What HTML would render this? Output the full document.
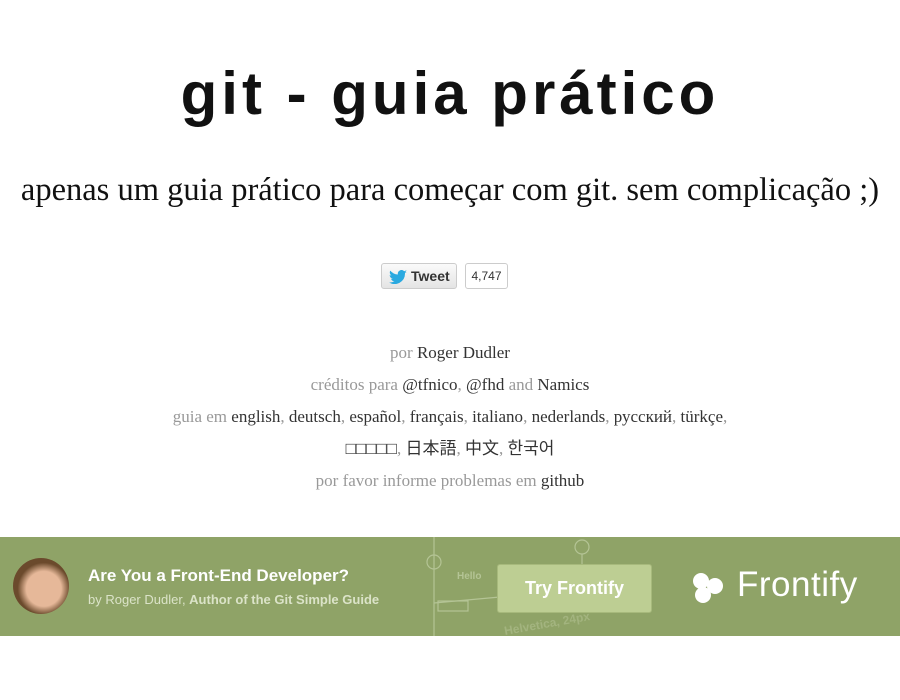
<!DOCTYPE html>
<html><head><meta charset="utf-8"><style>
body{margin:0;width:900px;height:700px;background:#fff;overflow:hidden;font-family:"Liberation Serif",serif;}
h1{position:absolute;top:54px;left:0;width:900px;margin:0;text-align:center;font-family:"Liberation Sans",sans-serif;font-weight:bold;font-size:60px;letter-spacing:4px;color:#111;line-height:80px}
.sub{position:absolute;top:172px;width:900px;text-align:center;font-size:32.5px;color:#111;white-space:nowrap}
.tw{position:absolute;top:263px;left:381px;width:76px;height:26px;border:1px solid #ccc;border-radius:3px;background:linear-gradient(#fafafa,#e4e4e4);font:bold 14px "Liberation Sans",sans-serif;color:#333;box-sizing:border-box;line-height:24px;padding-left:29px}
.cnt{position:absolute;top:263px;left:465px;width:43px;height:26px;border:1px solid #ccc;border-radius:3px;box-sizing:border-box;font:12px "Liberation Sans",sans-serif;color:#333;line-height:24px;text-align:center}
.lines{position:absolute;top:337px;width:900px;text-align:center;font-size:17px;color:#999;line-height:32px;white-space:nowrap}
.lines a{color:#333;text-decoration:none}
.ban{position:absolute;top:537px;left:0;width:900px;height:99px;background:#8fa367;font-family:"Liberation Sans",sans-serif}
</style></head><body>
<h1>git - guia prático</h1>
<div class="sub">apenas um guia prático para começar com git. sem complicação ;)</div>
<div class="tw"><svg style="position:absolute;left:7px;top:6px" width="18" height="14" viewBox="0 0 18 14"><path d="M18 1.7c-.7.3-1.4.5-2.1.6.8-.5 1.3-1.2 1.6-2-.7.4-1.5.7-2.3.9A3.7 3.7 0 0 0 8.9 4.5 10.4 10.4 0 0 1 1.3.6a3.7 3.7 0 0 0 1.1 4.9c-.6 0-1.2-.2-1.7-.5 0 1.8 1.3 3.3 3 3.6-.5.2-1.1.2-1.7.1.5 1.5 1.8 2.5 3.4 2.6A7.4 7.4 0 0 1 0 12.4 10.4 10.4 0 0 0 16 3.5v-.5c.8-.4 1.5-1 2-1.3z" fill="#2aa9e0"/></svg>Tweet</div>
<div class="cnt">4,747</div>
<div class="lines">
por <a>Roger Dudler</a><br>
créditos para <a>@tfnico</a>, <a>@fhd</a> and <a>Namics</a><br>
guia em <a>english</a>, <a>deutsch</a>, <a>español</a>, <a>français</a>, <a>italiano</a>, <a>nederlands</a>, <a>русский</a>, <a>türkçe</a>,<br>
<a style="font-family:'Liberation Sans','Noto Sans CJK JP',sans-serif">□□□□□</a>, <a style="font-family:'Liberation Sans','Noto Sans CJK JP',sans-serif">日本語</a>, <a style="font-family:'Liberation Sans','Noto Sans CJK SC',sans-serif">中文</a>, <a style="font-family:'Liberation Sans','Noto Sans CJK KR',sans-serif">한국어</a><br>
por favor informe problemas em <a>github</a>
</div>
<div class="ban">
<svg style="position:absolute;left:420px;top:0" width="220" height="99"><g stroke="#b4c495" fill="none" stroke-width="1.2"><line x1="14" y1="0" x2="14" y2="99"/><circle cx="14" cy="25" r="7"/><circle cx="162" cy="10" r="7"/><line x1="162" y1="17" x2="162" y2="30"/><line x1="14" y1="66" x2="80" y2="60"/><rect x="18" y="64" width="30" height="10"/></g><text x="37" y="42" fill="#b4c495" font-size="10" font-weight="bold">Hello</text><text x="85" y="98" fill="#a3b47f" font-size="12" font-weight="bold" transform="rotate(-10 85 98)">Helvetica, 24px</text></svg>
<div style="position:absolute;left:13px;top:21px;width:56px;height:56px;border-radius:50%;background:radial-gradient(circle at 55% 55%,#e6b899 0 40%,#6b4a2c 60%)"></div>
<div style="position:absolute;left:88px;top:29px;color:#fff;font-weight:bold;font-size:17px">Are You a Front-End Developer?</div>
<div style="position:absolute;left:88px;top:55px;color:#dbe3c8;font-size:13px">by Roger Dudler, <b>Author of the Git Simple Guide</b></div>
<div style="position:absolute;left:497px;top:27px;width:155px;height:49px;background:#bdce93;border:1px solid #a7b97c;border-radius:3px;box-sizing:border-box;color:#fff;font-weight:bold;font-size:18px;text-align:center;line-height:47px">Try Frontify</div>
<svg style="position:absolute;left:692px;top:35px" width="32" height="32" viewBox="0 0 32 32"><circle cx="9" cy="9" r="8" fill="#fff"/><circle cx="23" cy="14" r="8" fill="#fff"/><circle cx="11" cy="23" r="8" fill="#fff"/></svg>
<div style="position:absolute;left:737px;top:28px;color:#fff;font-size:35px;letter-spacing:0.5px">Frontify</div>
</div>
</body></html>
